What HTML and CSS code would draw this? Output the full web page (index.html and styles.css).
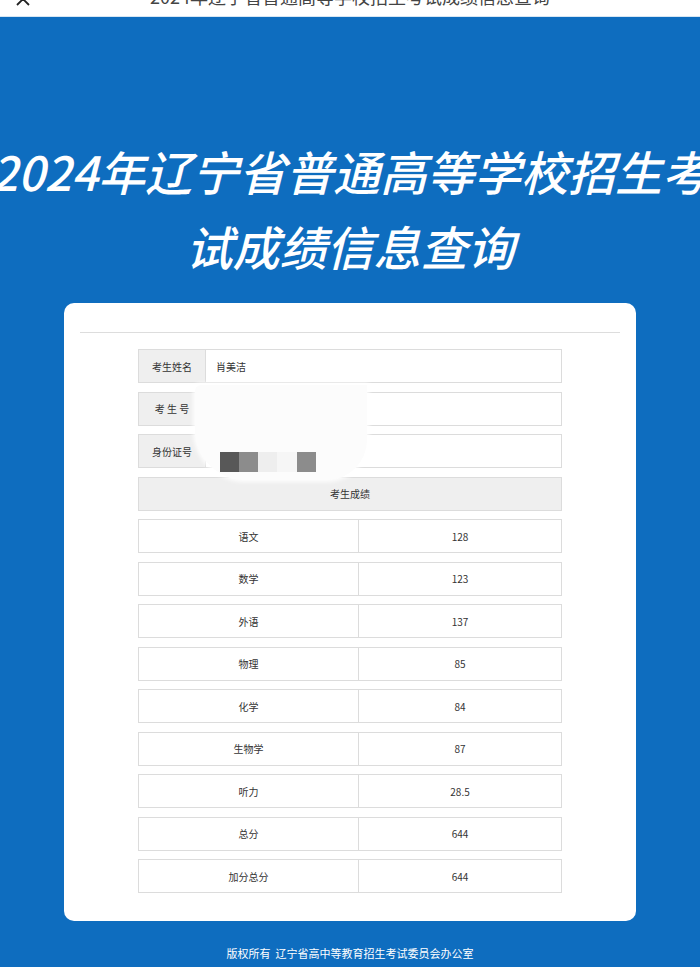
FILE: index.html
```html
<!DOCTYPE html>
<html lang="zh-CN">
<head>
<meta charset="utf-8">
<title>2024年辽宁省普通高等学校招生考试成绩信息查询</title>
<link rel="stylesheet" href="styles.css">
</head>
<body>
<header class="topbar">
  <svg class="close" width="16" height="16" viewBox="0 0 16 16"><path d="M2 2 L14 14 M14 2 L2 14" stroke="#222" stroke-width="1.8" fill="none"/></svg>
  <div class="topbar-title">2024年辽宁省普通高等学校招生考试成绩信息查询</div>
  <span class="spacer"></span>
</header>

<section class="hero">
  <div class="hero-line first">2024年辽宁省普通高等学校招生考</div>
  <div class="hero-line">试成绩信息查询</div>
</section>

<main class="card">
  <div class="card-head"></div>
  <div class="form">
    <div class="info-row"><div class="label">考生姓名</div><div class="value">肖美洁</div></div>
    <div class="info-row"><div class="label">考 生 号</div><div class="value"></div></div>
    <div class="info-row"><div class="label">身份证号</div><div class="value"></div></div>
    <div class="section-row">考生成绩</div>
    <div class="score-row"><div class="subject">语文</div><div class="score">128</div></div>
    <div class="score-row"><div class="subject">数学</div><div class="score">123</div></div>
    <div class="score-row"><div class="subject">外语</div><div class="score">137</div></div>
    <div class="score-row"><div class="subject">物理</div><div class="score">85</div></div>
    <div class="score-row"><div class="subject">化学</div><div class="score">84</div></div>
    <div class="score-row"><div class="subject">生物学</div><div class="score">87</div></div>
    <div class="score-row"><div class="subject">听力</div><div class="score">28.5</div></div>
    <div class="score-row"><div class="subject">总分</div><div class="score">644</div></div>
    <div class="score-row"><div class="subject">加分总分</div><div class="score">644</div></div>

    <div class="redact">
      <span class="px px-dark"></span><span class="px px-mid"></span><span class="px px-light"></span><span class="px px-gap"></span><span class="px px-mid"></span>
    </div>
  </div>
</main>

<footer class="footer">版权所有&nbsp; 辽宁省高中等教育招生考试委员会办公室</footer>
</body>
</html>
```

FILE: styles.css
```css
html, body {
  margin: 0;
  padding: 0;
  overflow-x: hidden;
}
body {
  background: #0e6dbf;
  font-family: "Noto Sans CJK SC", "Noto Sans", sans-serif;
  color: #333;
}

.topbar {
  height: 16px;
  overflow: hidden;
  background: #fff;
  border-bottom: 1px solid #d6e6f3;
  display: grid;
  grid-template-columns: 46px 1fr 46px;
  align-items: start;
}
.close {
  margin: -9px 0 0 15px;
}
.topbar-title {
  margin-top: -15px;
  font-size: 18px;
  line-height: 22px;
  color: #444;
  text-align: center;
  white-space: nowrap;
}

.hero {
  padding: 116px 0 20px;
  color: #fff;
  font-style: italic;
  font-weight: 500;
  font-size: 47px;
  line-height: 75px;
}
.hero-line {
  display: flex;
  justify-content: center;
  white-space: nowrap;
}

.card {
  display: block;
  margin: 0 64px;
  padding: 0 16px 28px;
  background: #fff;
  border-radius: 10px;
}
.card-head {
  height: 29px;
  border-bottom: 1px solid #ddd;
}

.form {
  position: relative;
  width: 424px;
  margin: 16px auto 0;
  display: flex;
  flex-direction: column;
  gap: 8.5px;
  font-size: 10px;
}

.info-row,
.score-row,
.section-row {
  height: 34px;
  box-sizing: border-box;
  border: 1px solid #dcdcdc;
}
.info-row {
  display: flex;
}
.label {
  width: 66px;
  background: #efefef;
  border-right: 1px solid #dcdcdc;
  display: flex;
  align-items: center;
  justify-content: center;
  color: #333;
}
.value {
  flex: 1;
  display: flex;
  align-items: center;
  padding-left: 10px;
}
.section-row {
  background: #efefef;
  display: flex;
  align-items: center;
  justify-content: center;
}
.score-row {
  display: grid;
  grid-template-columns: 220px 1fr;
}
.subject,
.score {
  display: flex;
  align-items: center;
  justify-content: center;
}
.subject {
  border-right: 1px solid #dcdcdc;
}

.redact {
  position: absolute;
  left: 57px;
  top: 36px;
  width: 172px;
  height: 95px;
  background: #fcfcfc;
  border-radius: 6px 0 40px 50px;
  box-shadow: 0 0 4px 2px rgba(255,255,255,0.9);
  display: flex;
  align-items: flex-start;
  padding: 67px 0 0 25px;
  box-sizing: border-box;
}
.px {
  width: 19px;
  height: 20px;
}
.px-dark { background: #585858; }
.px-mid { background: #8c8c8c; }
.px-light { background: #eeeeee; }
.px-gap { width: 20px; background: #f6f6f6; }

.footer {
  height: 46px;
  box-sizing: border-box;
  padding-top: 25px;
  font-size: 11px;
  line-height: 14px;
  color: #fff;
  text-align: center;
}
```
